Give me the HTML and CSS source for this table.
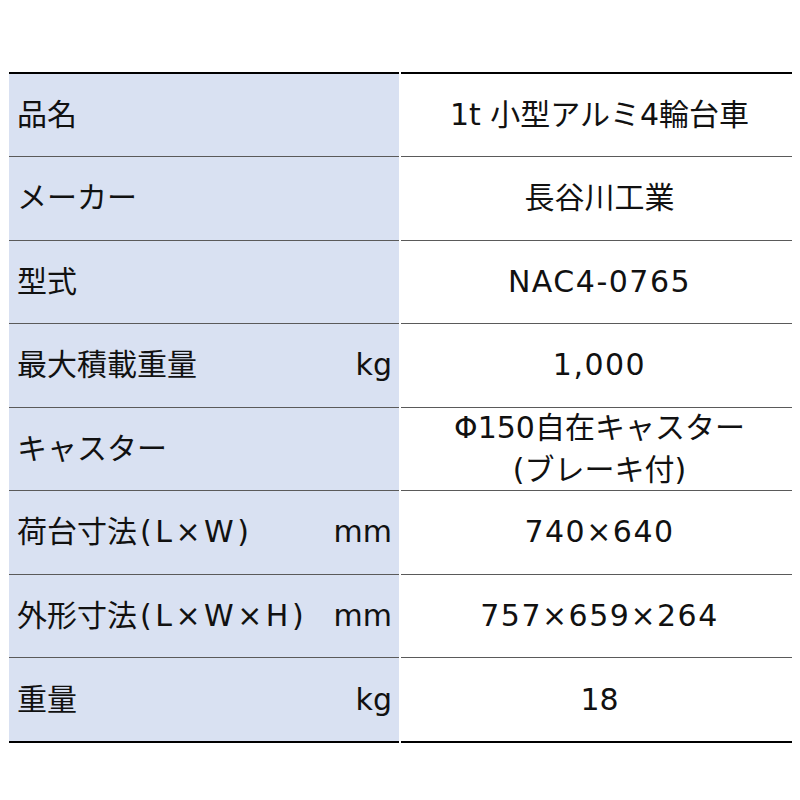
FILE: index.html
```html
<!DOCTYPE html>
<html lang="ja">
<head>
<meta charset="utf-8">
<link rel="stylesheet" href="styles.css">
</head>
<body>
<div class="spec">
  <div class="cell label"><span>品名</span></div>
  <div class="cell value">1t 小型アルミ4輪台車</div>
  <div class="cell label"><span>メーカー</span></div>
  <div class="cell value">長谷川工業</div>
  <div class="cell label"><span>型式</span></div>
  <div class="cell value"><span class="num">NAC4-0765</span></div>
  <div class="cell label"><span>最大積載重量</span><span class="unit">kg</span></div>
  <div class="cell value"><span class="num">1,000</span></div>
  <div class="cell label"><span>キャスター</span></div>
  <div class="cell value">Φ150自在キャスター<br>(ブレーキ付)</div>
  <div class="cell label"><span>荷台寸法<span class="dim">(L×W)</span></span><span class="unit">mm</span></div>
  <div class="cell value"><span class="num">740×640</span></div>
  <div class="cell label"><span>外形寸法<span class="dim">(L×W×H)</span></span><span class="unit">mm</span></div>
  <div class="cell value"><span class="num">757×659×264</span></div>
  <div class="cell label last"><span>重量</span><span class="unit">kg</span></div>
  <div class="cell value last">18</div>
</div>
</body>
</html>
```

FILE: styles.css
```css
html, body {
  margin: 0;
  padding: 0;
  background: #ffffff;
}

body {
  padding: 72px 0 0 9px;
  font-family: "DejaVu Sans", "Noto Sans CJK JP", sans-serif;
  color: #111111;
}

.spec {
  display: grid;
  grid-template-columns: 390px 391px;
  grid-template-rows: 85px repeat(6, 83.5px) 85px;
  column-gap: 2px;
  width: 783px;
}

.cell {
  box-sizing: border-box;
  border-bottom: 1px solid #5a5a5a;
  font-size: 30px;
  line-height: 42px;
  display: flex;
  align-items: center;
}

.cell:nth-child(1),
.cell:nth-child(2) {
  border-top: 2px solid #000000;
}

.label {
  background: #d9e1f2;
  justify-content: space-between;
  padding: 0 7px 0 8px;
}

.value {
  background: #ffffff;
  justify-content: center;
  text-align: center;
  padding-left: 6px;
}

.num {
  letter-spacing: 1.5px;
}

.dim {
  letter-spacing: 3.5px;
  margin-left: 3px;
}

.cell.last {
  border-bottom: 2px solid #000000;
}
```
